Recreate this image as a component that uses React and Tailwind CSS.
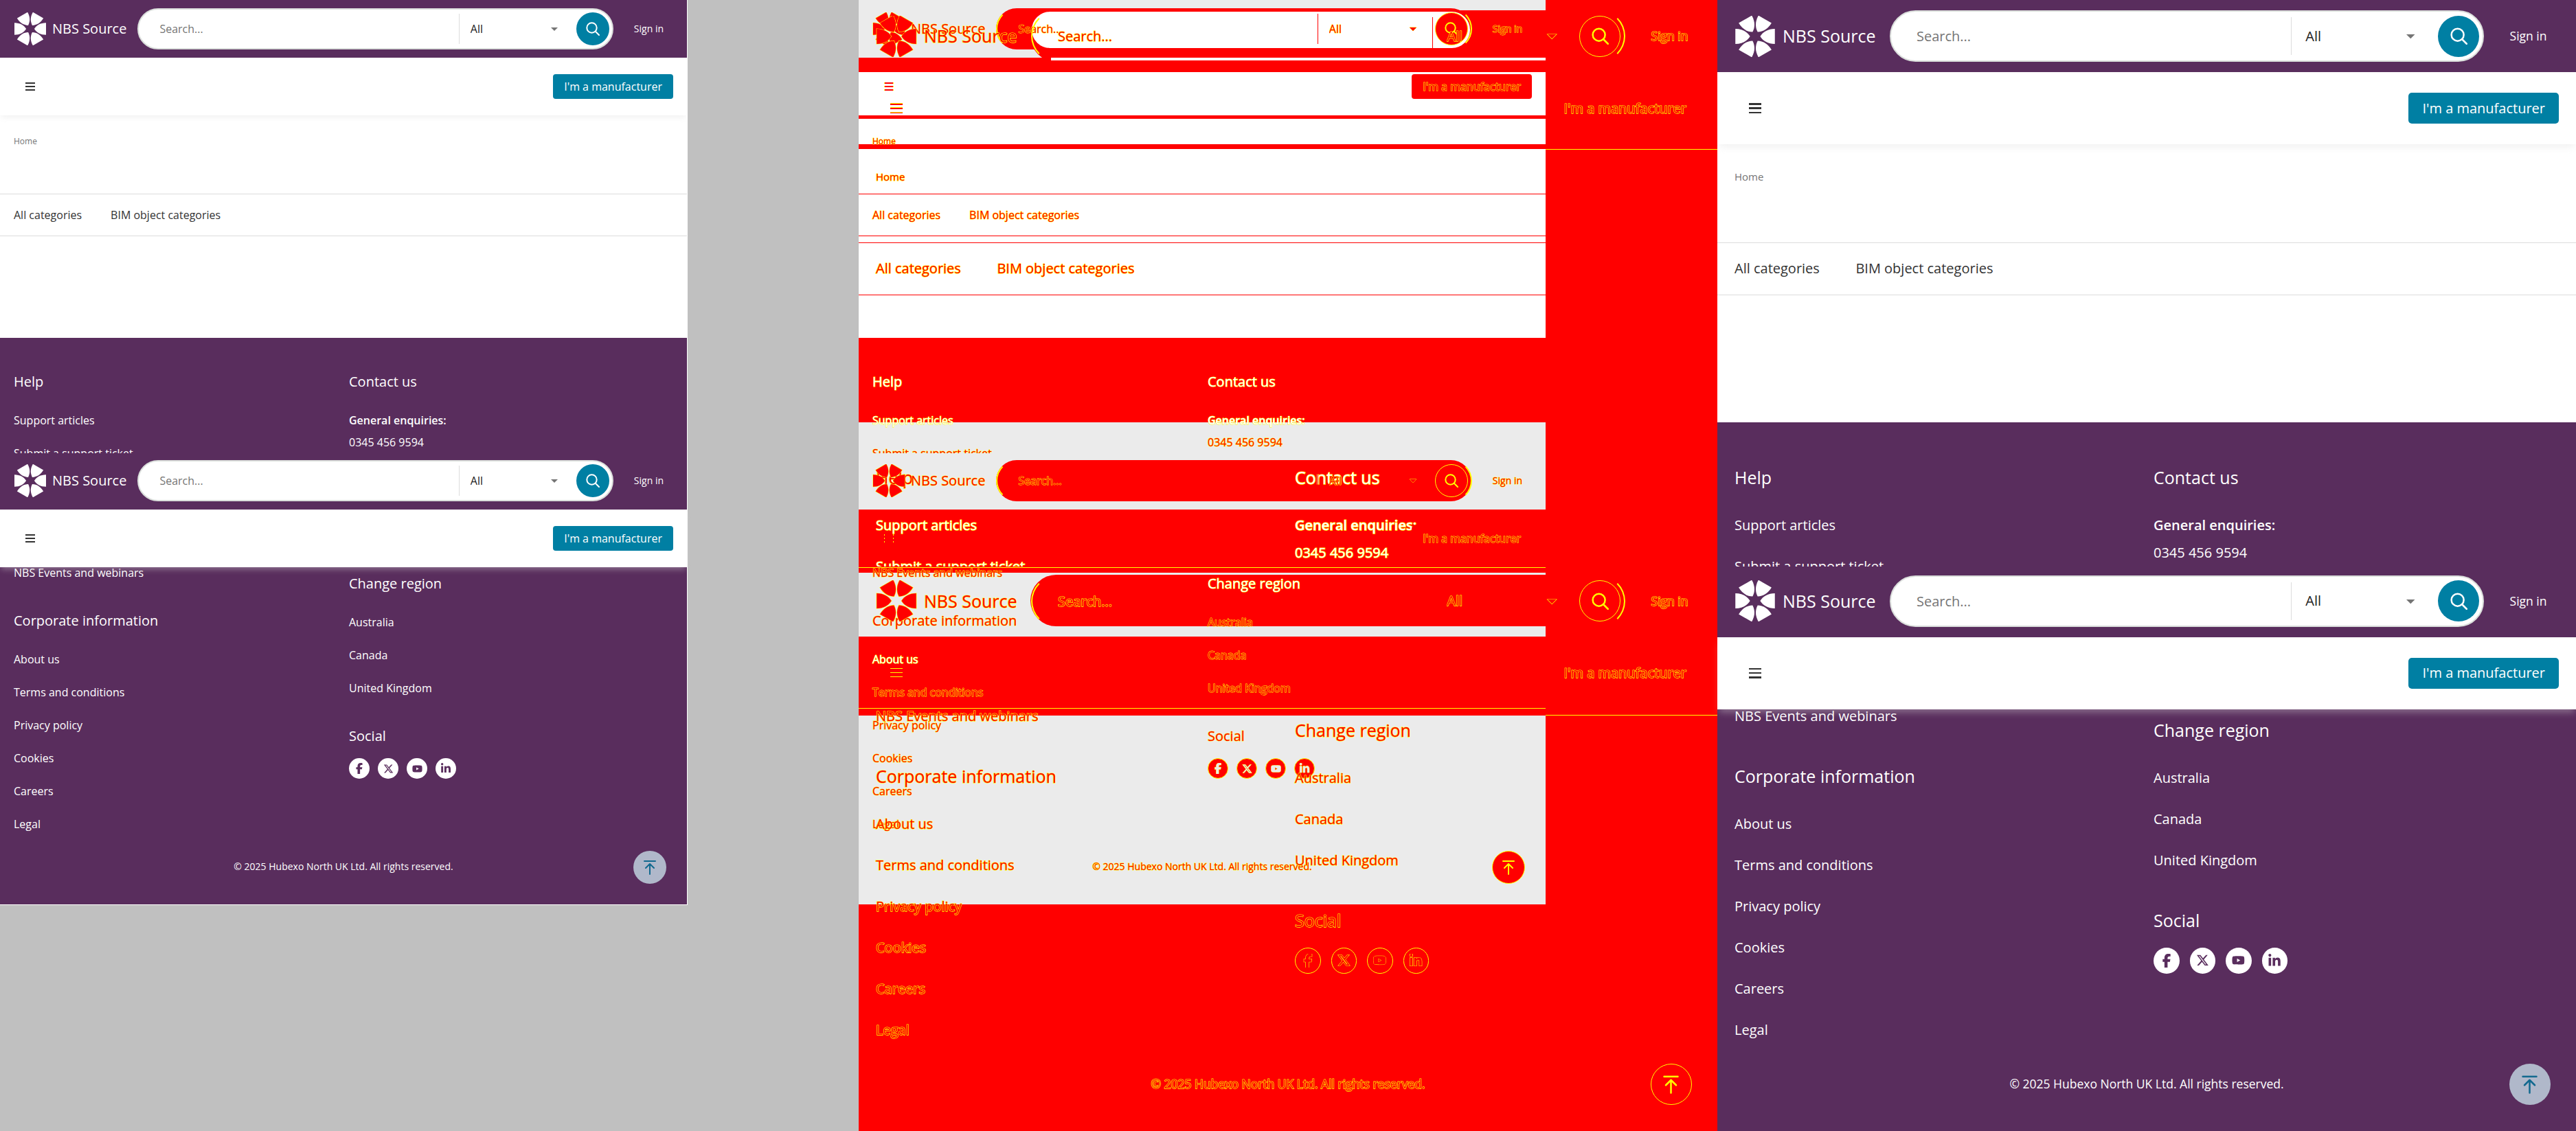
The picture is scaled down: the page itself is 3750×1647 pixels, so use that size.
import { FaFacebookF, FaLinkedinIn, FaXTwitter, FaYoutube } from "react-icons/fa6";

const PLAIN = {
  root: "text-white",
  header: "bg-[#592d5d]",
  pill: "border-[#dadedb] bg-white",
  bar: "bg-white shadow-[0_5px_8px_-2px_rgba(220,220,220,0.4)]",
  body: "bg-white",
  footer: "bg-[#592d5d]",
  placeholder: "placeholder:text-[#757575]",
  muted: "text-[#757575]",
  dark: "text-[#333]",
  select: "text-[#222]",
  line: "border-[#dcdcdc]",
  divider: "border-[#dcdcdc]",
  arrow: "fill-[#757575]",
  burger: "bg-[#333]",
  cta: "bg-[#007fa3]",
  searchButton: "bg-[#007fa3]",
  logo: "fill-white",
  lens: "stroke-white",
  social: "bg-white text-[#592d5d]",
  top: "bg-[#b0b8ca]",
  topArrow: "stroke-[#12698f]",
  glyph: "",
};

const MARK = {
  ...PLAIN,
  root: "text-[#f00] [-webkit-text-stroke:1px_#ff0] [paint-order:stroke_fill]",
  header: "",
  pill: "border-x-[#ff0] border-y-transparent",
  bar: "",
  body: "",
  footer: "",
  placeholder: "placeholder:text-[#f00]",
  muted: "",
  dark: "",
  select: "",
  line: "border-[#f00]",
  divider: "border-[#f00]",
  arrow: "fill-[#f00] stroke-[#ff0]",
  burger: "border-x border-[#ff0] bg-[#f00]",
  cta: "bg-[#f00]",
  searchButton: "border border-[#ff0] bg-[#f00]",
  logo: "fill-[#f00] stroke-[#ff0]",
  lens: "stroke-[#ff0]",
  social: "border border-[#ff0] bg-[#f00] text-[#ebebeb]",
  top: "border border-[#ff0] bg-[#f00]",
  topArrow: "stroke-[#ff0]",
  glyph: "stroke-[#ff0] [stroke-width:30]",
};

const MARK_LARGE = {
  ...MARK,
  burger: "border-t border-[#ff0] bg-[#f00]",
  social: "border border-[#ff0] bg-[#f00] text-[#f00]",
};

const SMALL_SHARED = [
  "Help",
  "Contact us",
  "Support articles",
  "General enquiries:",
  "Change region",
  "About us",
];
const LARGE_SHARED = ["Contact us", "Support articles", "General enquiries:", "0345 456 9594", "Submit a support ticket"];

function Logo({ tone }) {
  return (
    <svg viewBox="-24 -24 48 48" className={`size-12 shrink-0 ${tone.logo}`} aria-hidden="true">
      {[0, 60, 120, 180, 240, 300].map((angle) => (
        <path key={angle} transform={`rotate(${angle})`} d="M5.9 0C9.5-5.6 15-8.7 23-8.8V8.8C15 8.7 9.5 5.6 5.9 0Z" />
      ))}
    </svg>
  );
}

function Header({ tone, cropped }) {
  return (
    <header className="relative z-10">
      <div className={`flex items-center px-5 pb-3 ${cropped ? "pt-2.5" : "pt-3"} ${tone.header}`}>
        <a href="#home" className="flex items-center gap-2 text-xl">
          <Logo tone={tone} />
          <span className="whitespace-nowrap">NBS Source</span>
        </a>
        <form className={`ml-4 flex h-15 flex-1 items-center rounded-full border-2 pr-1 pl-[30px] ${tone.pill}`}>
          <input type="text" aria-label="Search" placeholder="Search..." className={`h-10 min-w-0 flex-1 bg-transparent outline-none ${tone.placeholder}`} />
          <div className={`relative h-11 w-[171px] border-l ${tone.divider}`}>
            <select aria-label="Search in" className={`h-full w-full appearance-none bg-transparent pl-4 ${tone.select}`}>
              <option>All</option>
            </select>
            <svg viewBox="0 0 10 5" className={`pointer-events-none absolute top-5 right-[27px] h-[5px] w-2.5 overflow-visible ${tone.arrow}`} aria-hidden="true">
              <path d="M0 0H10L5 5Z" />
            </svg>
          </div>
          <button type="button" aria-label="Search" className={`grid size-12 place-items-center rounded-full ${tone.searchButton}`}>
            <svg viewBox="0 0 20 20" fill="none" strokeWidth="2" strokeLinecap="round" className={`size-5 ${tone.lens}`} aria-hidden="true">
              <circle cx="8.5" cy="8.5" r="7.2" />
              <path d="M13.8 13.8L19 19" />
            </svg>
          </button>
        </form>
        <a href="#sign-in" className="mr-3.5 ml-[30px] text-sm whitespace-nowrap">
          Sign in
        </a>
      </div>
      <div className={`flex h-21 items-center justify-between pr-5 pl-9 ${tone.bar}`}>
        <button type="button" aria-label="Menu" className="flex w-4 flex-col items-stretch gap-[3px] px-px">
          <span className={`h-0.5 ${tone.burger}`} />
          <span className={`h-0.5 ${tone.burger}`} />
          <span className={`h-0.5 ${tone.burger}`} />
        </button>
        <button type="button" className={`h-9 rounded px-4 font-medium ${tone.cta}`}>
          I'm a manufacturer
        </button>
      </div>
    </header>
  );
}

function Heading({ shared, children }) {
  return <h2 className={`mb-4 text-xl leading-8 font-medium ${shared.includes(children) ? "text-white" : ""}`}>{children}</h2>;
}

function Links({ items, shared }) {
  return (
    <ul>
      {items.map((item) => (
        <li key={item} className="leading-12">
          <a href="#link" className={shared.includes(item) ? "text-white" : ""}>
            {item}
          </a>
        </li>
      ))}
    </ul>
  );
}

const SOCIAL = [
  ["Facebook", FaFacebookF, 16],
  ["X", FaXTwitter, 15],
  ["YouTube", FaYoutube, 15],
  ["LinkedIn", FaLinkedinIn, 16],
];

function UpperScreen({ tone, shared }) {
  return (
    <section className="h-[660px] overflow-hidden">
      <Header tone={tone} />
      <div className={`pt-7 pb-[148px] ${tone.body}`}>
        <a href="#home" className={`ml-5 block text-xs leading-5 ${tone.muted}`}>
          Home
        </a>
        <nav className={`mt-[66px] flex h-[62px] items-center gap-[42px] border-y px-5 ${tone.line} ${tone.dark}`}>
          <a href="#all">All categories</a>
          <a href="#bim">BIM object categories</a>
        </nav>
      </div>
      <footer className={`grid grid-cols-[488fr_472fr] px-5 pt-12 ${tone.footer}`}>
        <div>
          <Heading shared={shared}>Help</Heading>
          <Links items={["Support articles", "Submit a support ticket"]} shared={shared} />
        </div>
        <div>
          <Heading shared={shared}>Contact us</Heading>
          <div className="pt-2 leading-8">
            <strong className={`block font-semibold ${shared.includes("General enquiries:") ? "text-white" : ""}`}>General enquiries:</strong>
            <a href="tel:03454569594" className={shared.includes("0345 456 9594") ? "text-white" : ""}>
              0345 456 9594
            </a>
          </div>
        </div>
      </footer>
    </section>
  );
}

function LowerScreen({ tone, shared }) {
  return (
    <section className="relative">
      <Header tone={tone} cropped />
      <footer className={`-mt-4 pb-[43px] ${tone.footer}`}>
        <div className="grid grid-cols-[488fr_472fr] px-5">
          <div className="flex flex-col gap-[30px]">
            <Links items={["NBS Events and webinars"]} shared={shared} />
            <div>
              <Heading shared={shared}>Corporate information</Heading>
              <Links items={["About us", "Terms and conditions", "Privacy policy", "Cookies", "Careers", "Legal"]} shared={shared} />
            </div>
          </div>
          <div className="flex flex-col gap-[30px] pt-6">
            <div>
              <Heading shared={shared}>Change region</Heading>
              <Links items={["Australia", "Canada", "United Kingdom"]} shared={shared} />
            </div>
            <div>
              <Heading shared={shared}>Social</Heading>
              <ul className="flex gap-3">
                {SOCIAL.map(([name, Icon, size]) => (
                  <li key={name}>
                    <a href="#social" aria-label={name} className={`grid size-[30px] place-items-center rounded-full ${tone.social}`}>
                      <Icon size={size} className={tone.glyph} />
                    </a>
                  </li>
                ))}
              </ul>
            </div>
          </div>
        </div>
        <p className="mt-[26px] text-center text-sm leading-6">© 2025 Hubexo North UK Ltd. All rights reserved.</p>
      </footer>
      <button type="button" aria-label="Back to top" className={`absolute right-[30px] bottom-[30px] grid size-12 place-items-center rounded-full ${tone.top}`}>
        <svg viewBox="0 0 20 24" fill="none" strokeWidth="2" strokeLinecap="round" strokeLinejoin="round" className={`h-6 w-5 ${tone.topArrow}`} aria-hidden="true">
          <path d="M2 3H18M10 22V7M4 13L10 7L16 13" />
        </svg>
      </button>
    </section>
  );
}

function Page({ tone, shared = [], className }) {
  return (
    <div className={`text-base ${tone.root} ${className}`}>
      <UpperScreen tone={tone} shared={shared} />
      <LowerScreen tone={tone} shared={shared} />
    </div>
  );
}

const BANDS = [
  "h-[84px] bg-[#ebebeb]",
  "h-[21px] bg-[#f00]",
  "h-[63px] bg-white",
  "h-[5px] bg-[#f00]",
  "h-[37px] bg-white",
  "h-[7px] bg-[#f00]",
  "h-[275px] bg-white",
  "h-[123px] bg-[#f00]",
  "h-[127px] bg-[#ebebeb]",
  "h-[84px] bg-[#f00]",
  "h-2 border-t border-[#ff0] bg-[#f00]",
  "h-[93px] bg-[#ebebeb]",
  "h-[105px] border-b border-[#ff0] bg-[#f00]",
  "h-[10px] bg-[#f00]",
  "h-[275px] bg-[#ebebeb]",
];

function Difference() {
  return (
    <div className="relative overflow-hidden bg-[#f00]">
      <div className="w-4/5">
        {BANDS.map((band, i) => (
          <div key={i} className={band} />
        ))}
      </div>
      <div className="absolute top-3 left-[200px] h-15 w-[692px] rounded-full bg-[#f00]" />
      <div className="absolute top-[15px] left-[250px] h-[75px] w-[864px] rounded-full bg-[#f00]" />
      <div className="absolute top-[17px] left-[252px] h-[53px] w-[638px] rounded-full bg-white" />
      <div className="absolute top-[84px] left-[280px] h-1 w-[720px] bg-white" />
      <div className="absolute top-[670px] left-[200px] h-15 w-[692px] rounded-full bg-[#f00]" />
      <div className="absolute top-[837px] left-[250px] h-[75px] w-[864px] rounded-full bg-[#f00]" />
      <div className="absolute top-[217px] right-0 left-[80%] h-px bg-[#ff0]" />
      <div className="absolute top-[1041px] right-0 left-[80%] h-px bg-[#ff0]" />
      <Page tone={MARK} shared={SMALL_SHARED} className="absolute inset-x-0 top-0 w-4/5" />
      <Page tone={MARK_LARGE} shared={LARGE_SHARED} className="absolute inset-x-0 top-0 [zoom:1.25]" />
    </div>
  );
}

export default function App() {
  return (
    <main className="grid min-h-screen grid-cols-3 overflow-hidden bg-[#c0c0c0] font-['Open_Sans',sans-serif]">
      <div>
        <Page tone={PLAIN} className="box-content w-4/5 border-r border-b border-white" />
      </div>
      <Difference />
      <div className="bg-[#592d5d]">
        <Page tone={PLAIN} className="[zoom:1.25]" />
      </div>
    </main>
  );
}
